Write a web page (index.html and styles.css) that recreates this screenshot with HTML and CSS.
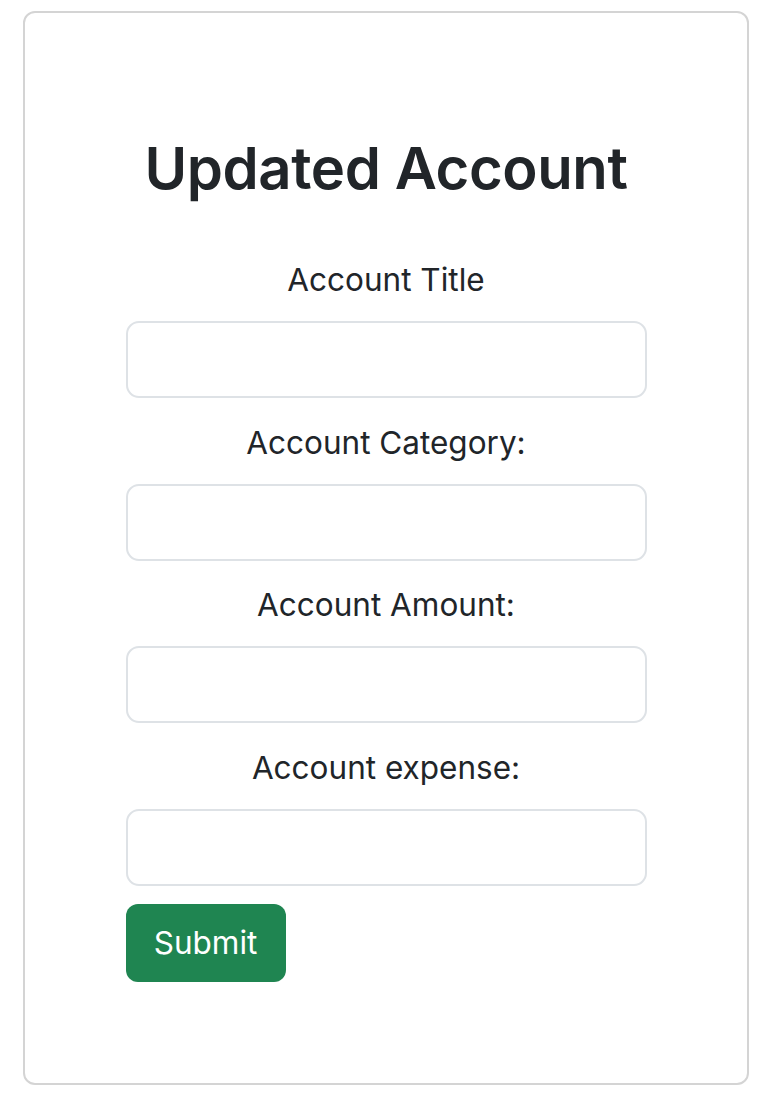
FILE: index.html
```html
<!DOCTYPE html>
<html lang="en">
<head>
<meta charset="utf-8">
<title>Updated Account</title>
<link rel="stylesheet" href="styles.css">
</head>
<body>
<div class="card">
  <form class="form">
    <h1 class="title">Updated Account</h1>
    <label class="label first" for="t">Account Title</label>
    <input class="field" id="t" type="text">
    <label class="label" for="c">Account Category:</label>
    <input class="field" id="c" type="text">
    <label class="label" for="a">Account Amount:</label>
    <input class="field" id="a" type="text">
    <label class="label" for="e">Account expense:</label>
    <input class="field" id="e" type="text">
    <div class="actions"><button class="btn" type="button">Submit</button></div>
  </form>
</div>
</body>
</html>
```

FILE: styles.css
```css
html, body {
  margin: 0;
  padding: 0;
  background: #ffffff;
}
body {
  font-family: Inter, "Liberation Sans", Arial, sans-serif;
  color: #212529;
}
.card {
  box-sizing: border-box;
  width: 726px;
  height: 1074px;
  margin: 11px 0 0 23px;
  border: 2px solid #d4d4d4;
  border-radius: 12px;
  padding-top: 119px;
  display: flex;
  justify-content: center;
}
.form {
  width: 521px;
  display: flex;
  flex-direction: column;
}
.title {
  margin: 0 0 51px;
  font-size: 58px;
  line-height: 72px;
  font-weight: 600;
  text-align: center;
  letter-spacing: -0.4px;
}
.label {
  display: block;
  margin: 19.5px 0 16px;
  font-size: 31.5px;
  line-height: 50px;
  font-weight: 400;
  text-align: center;
}
.label.first {
  margin-top: 0;
}
.field {
  box-sizing: border-box;
  width: 100%;
  height: 77px;
  margin: 0;
  border: 2px solid #dee2e6;
  border-radius: 13px;
  background: #ffffff;
  font: inherit;
  font-size: 32px;
  padding: 0 24px;
  outline: none;
}
.actions {
  margin-top: 18px;
  display: flex;
}
.btn {
  width: 160px;
  height: 78px;
  border: 0;
  border-radius: 12px;
  background: #1f8551;
  color: #ffffff;
  font-family: inherit;
  font-size: 31.5px;
  font-weight: 400;
  padding: 0;
}
```
